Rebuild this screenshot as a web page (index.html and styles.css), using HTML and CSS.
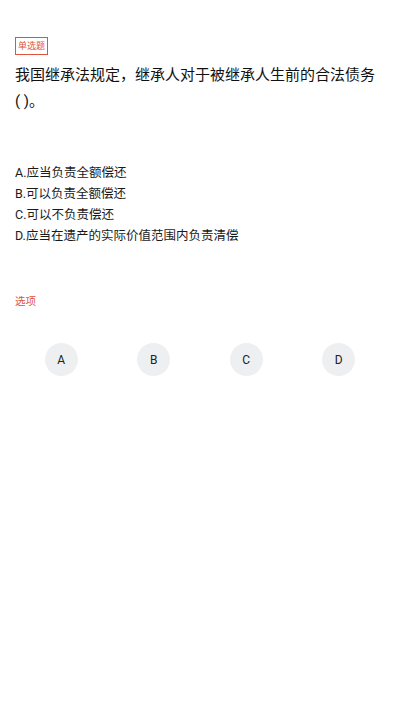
FILE: index.html
```html
<!DOCTYPE html>
<html lang="zh-CN">
<head>
<meta charset="utf-8">
<title>单选题</title>
<link rel="stylesheet" href="styles.css">
</head>
<body>
<div class="page">
  <div class="tag-row"><span class="tag">单选题</span></div>
  <div class="question">我国继承法规定，继承人对于被继承人生前的合法债务<span class="blank">( )。</span></div>
  <div class="options">
    <div class="option">A.应当负责全额偿还</div>
    <div class="option">B.可以负责全额偿还</div>
    <div class="option">C.可以不负责偿还</div>
    <div class="option">D.应当在遗产的实际价值范围内负责清偿</div>
  </div>
  <div class="label">选项</div>
  <div class="choices">
    <div class="choice-cell"><span class="choice">A</span></div>
    <div class="choice-cell"><span class="choice">B</span></div>
    <div class="choice-cell"><span class="choice">C</span></div>
    <div class="choice-cell"><span class="choice">D</span></div>
  </div>
</div>
</body>
</html>
```

FILE: styles.css
```css
html, body {
  margin: 0;
  padding: 0;
  background: #ffffff;
}
body {
  font-family: Roboto, "Noto Sans CJK SC", sans-serif;
  color: #1a1a1a;
}
.page {
  padding: 37px 15px 0 15px;
}
.tag-row {
  display: flex;
}
.tag {
  display: inline-block;
  font-size: 9px;
  line-height: 14px;
  padding: 1px 2px;
  border: 1px solid #e0533d;
  color: #e0533d;
}
.question {
  margin-top: 7px;
  font-size: 15px;
  line-height: 26px;
  color: #111;
}
.blank {
  white-space: nowrap;
  display: inline-block;
}
.options {
  margin-top: 48px;
  font-size: 12.5px;
  line-height: 21px;
  color: #1a1a1a;
}
.label {
  margin-top: 49px;
  font-size: 10.5px;
  line-height: 14px;
  color: #e0533d;
}
.choices {
  margin-top: 34px;
  display: grid;
  grid-template-columns: repeat(4, 1fr);
}
.choice-cell {
  display: flex;
  justify-content: center;
}
.choice {
  width: 33px;
  height: 33px;
  border-radius: 50%;
  background: #eeeff1;
  display: flex;
  align-items: center;
  justify-content: center;
  font-size: 12px;
  color: #222;
}
```
